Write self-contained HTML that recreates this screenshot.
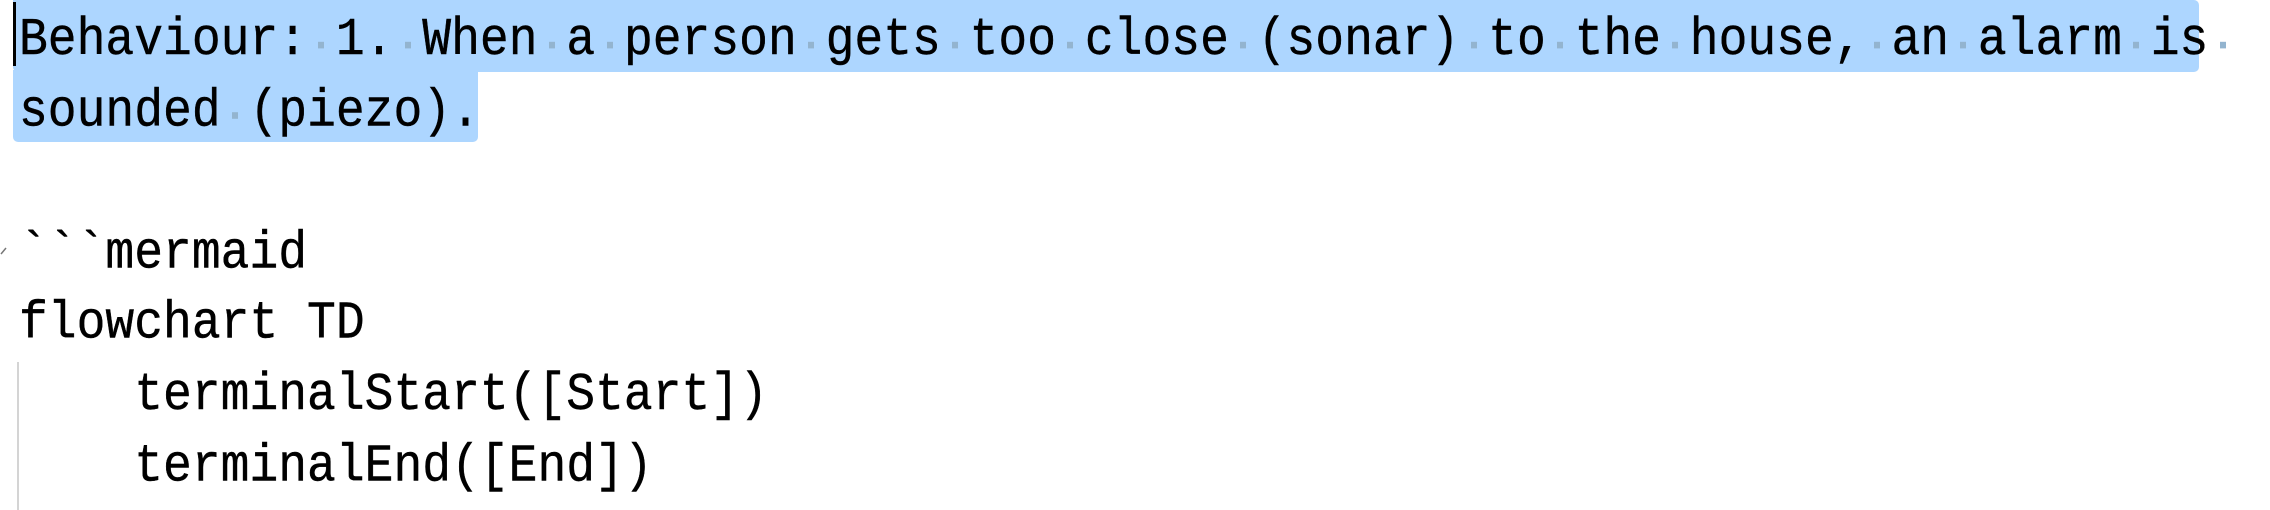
<!DOCTYPE html>
<html><head><meta charset="utf-8"><style>
html,body{margin:0;padding:0;background:#fff;width:2270px;height:510px;overflow:hidden;position:relative}
.sel{position:absolute;background:#add6ff;border-radius:5px}
.txt{position:absolute;left:19px;top:0;padding-top:5px;font-family:"Liberation Mono","DejaVu Sans Mono",monospace;font-size:48px;line-height:64.6px;color:#000;white-space:pre;transform:scaleY(1.1);transform-origin:0 0;-webkit-text-stroke:0.4px #000}
.d{background:linear-gradient(#93b4cf,#93b4cf) no-repeat 50% 58%/6px 6px}
.caret{position:absolute;left:13px;top:2px;width:3px;height:64px;background:#000}
.guide{position:absolute;left:17px;top:362px;width:2px;height:148px;background:#d4d4d4}
</style></head><body>
<div class="sel" style="left:13px;top:0;width:2186px;height:72px;border-top-left-radius:0"></div>
<div class="sel" style="left:13px;top:70px;width:465px;height:72px;border-top-left-radius:0;border-top-right-radius:0"></div>
<div class="caret"></div>
<div class="guide"></div>
<svg style="position:absolute;left:0;top:244px" width="8" height="12"><path d="M1 10 L6 4" stroke="#777" stroke-width="1.5" fill="none"/></svg>
<div class="txt">Behaviour:<span class="d"> </span>1.<span class="d"> </span>When<span class="d"> </span>a<span class="d"> </span>person<span class="d"> </span>gets<span class="d"> </span>too<span class="d"> </span>close<span class="d"> </span>(sonar)<span class="d"> </span>to<span class="d"> </span>the<span class="d"> </span>house,<span class="d"> </span>an<span class="d"> </span>alarm<span class="d"> </span>is<span class="d"> </span>
sounded<span class="d"> </span>(piezo).

&#96;&#96;&#96;mermaid
flowchart TD
    terminalStart([Start])
    terminalEnd([End])</div>
</body></html>
